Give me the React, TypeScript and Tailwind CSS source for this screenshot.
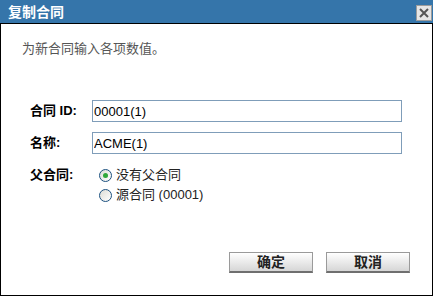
const font = { fontFamily: '"Liberation Sans", "Noto Sans CJK SC", sans-serif' }

function Radio({ checked, label }: { checked?: boolean; label: string }) {
  return (
    <label className="flex items-center h-[20px] pl-[7px] gap-[4px] text-[13px] text-[#222]">
      <span className="w-[13px] h-[13px] rounded-full border border-[#1c5180] bg-gradient-to-br from-[#dcdcd6] to-white flex items-center justify-center">
        {checked && <span className="w-[5px] h-[5px] rounded-full bg-[#2fa83a]" />}
      </span>
      <span>{label}</span>
    </label>
  )
}

function Btn({ label }: { label: string }) {
  return (
    <button className="w-[84px] h-[21px] border border-[#9a9a9a] border-b-[#6f6f6f] border-b-2 bg-gradient-to-b from-white to-[#d6d6d6] text-[14px] font-bold text-[#222] leading-none">
      {label}
    </button>
  )
}

export default function App() {
  return (
    <div className="w-[433px] h-[296px] bg-white" style={font}>
      <div className="h-[23px] bg-[#3575aa] flex items-center justify-between pl-[8px] pr-[1px]">
        <span className="text-white font-bold text-[14px] leading-none mt-[1px]">复制合同</span>
        <span className="w-[16px] h-[16px] mt-[2px] border border-[#9c9c9c] bg-[#e6e6e6] flex items-center justify-center">
          <svg width="10" height="10" viewBox="0 0 10 10">
            <path d="M1 1 L9 9 M9 1 L1 9" stroke="#555" strokeWidth="2" />
          </svg>
        </span>
      </div>
      <div className="h-[273px] border border-black flex flex-col">
        <p className="pt-[17px] pl-[21px] text-[13px] leading-[16px] text-[#555]">为新合同输入各项数值。</p>
        <div className="mt-[43px] pl-[29px] grid grid-cols-[62px_310px] gap-y-[10px] items-center">
          <span className="text-[13px] font-bold text-black">合同 ID:</span>
          <input
            defaultValue="00001(1)"
            className="h-[22px] border border-[#7f9db9] pl-[1px] text-[13px] text-black outline-none"
          />
          <span className="text-[13px] font-bold text-black">名称:</span>
          <input
            defaultValue="ACME(1)"
            className="h-[22px] border border-[#7f9db9] pl-[1px] text-[13px] text-black outline-none"
          />
          <span className="self-start mt-[1px] text-[13px] font-bold leading-[20px] text-black">父合同:</span>
          <div className="mt-[1px] flex flex-col">
            <Radio checked label="没有父合同" />
            <Radio label="源合同 (00001)" />
          </div>
        </div>
        <div className="mt-[47px] pr-[22px] flex justify-end gap-[13px]">
          <Btn label="确定" />
          <Btn label="取消" />
        </div>
      </div>
    </div>
  )
}
